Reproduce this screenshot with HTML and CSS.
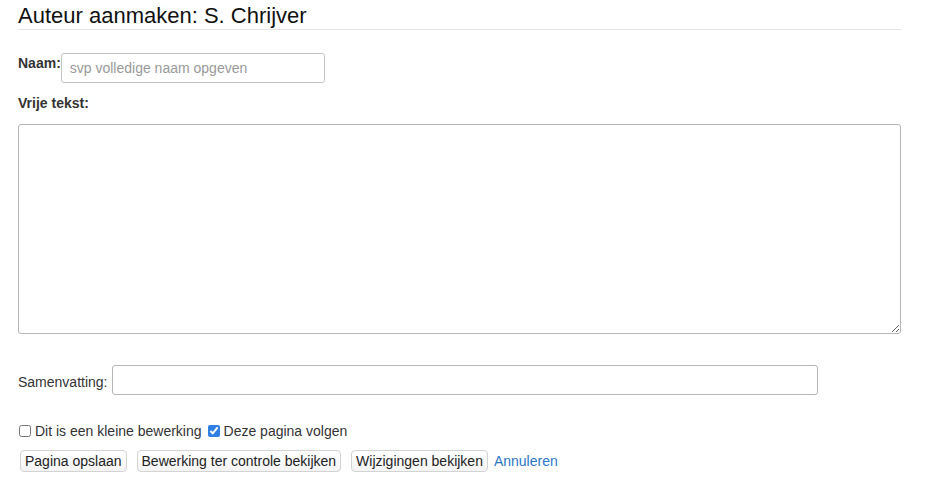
FILE: index.html
```html
<!DOCTYPE html>
<html lang="nl">
<head>
<meta charset="utf-8">
<title>Auteur aanmaken: S. Chrijver</title>
<link rel="stylesheet" href="styles.css">
</head>
<body>
<div class="page">
  <h1 class="title">Auteur aanmaken: S. Chrijver</h1>
  <form class="form">
    <div class="name-row">
      <label class="label-bold" for="naam">Naam:</label>
      <input class="name-input" id="naam" type="text" placeholder="svp volledige naam opgeven">
    </div>
    <div class="label-bold text-label">Vrije tekst:</div>
    <textarea class="text-area"></textarea>
    <div class="summary-row">
      <label class="summary-label" for="sam">Samenvatting:</label>
      <input class="summary-input" id="sam" type="text">
    </div>
    <div class="check-row">
      <label class="check"><input type="checkbox" class="box"> Dit is een kleine bewerking</label>
      <label class="check"><input type="checkbox" class="box" checked> Deze pagina volgen</label>
    </div>
    <div class="button-row">
      <button type="button" class="btn">Pagina opslaan</button>
      <button type="button" class="btn">Bewerking ter controle bekijken</button>
      <button type="button" class="btn">Wijzigingen bekijken</button>
      <a class="cancel" href="#">Annuleren</a>
    </div>
  </form>
</div>
</body>
</html>
```
FILE: styles.css
```css
* { box-sizing: border-box; }
body {
  margin: 0;
  background: #fff;
  font-family: "Liberation Sans", Arial, sans-serif;
  font-size: 14px;
  line-height: 20px;
  color: #333;
}
.page {
  width: 883px;
  margin-left: 18px;
}
.title {
  margin: 0;
  padding-top: 4px;
  font-size: 22px;
  font-weight: normal;
  line-height: 24px;
  color: #111;
  border-bottom: 1px solid #e6e6e6;
  padding-bottom: 1px;
}
.form {
  display: flex;
  flex-direction: column;
  padding-top: 23px;
}
.name-row {
  display: flex;
  align-items: flex-start;
}
.label-bold {
  font-weight: bold;
  color: #333;
}
.name-input {
  width: 264px;
  height: 30px;
  border: 1px solid #c4c4c4;
  border-radius: 3px;
  padding: 0 8px;
  font: inherit;
  color: #333;
}
.name-input::placeholder { color: #999; }
.text-label {
  margin-top: 10px;
}
.text-area {
  margin-top: 11px;
  width: 883px;
  height: 210px;
  border: 1px solid #b5b5b5;
  border-radius: 3px;
  resize: both;
  font: inherit;
}
.summary-row {
  display: flex;
  align-items: center;
  margin-top: 31px;
}
.summary-label {
  padding-top: 3px;
  margin-right: 4px;
}
.summary-input {
  width: 706px;
  height: 30px;
  border: 1px solid #b5b5b5;
  border-radius: 3px;
  font: inherit;
}
.check-row {
  display: flex;
  gap: 5px;
  margin-top: 26px;
}
.check {
  display: flex;
  align-items: center;
}
.box {
  width: 12px;
  height: 12px;
  margin: 0 4px 0 1px;
  accent-color: #2f7ee2;
}
.button-row {
  display: flex;
  align-items: center;
  gap: 9px;
  margin-top: 9px;
  padding-left: 2px;
}
.btn {
  height: 22px;
  padding: 0 4px;
  font: inherit;
  color: #222;
  background: linear-gradient(#fff, #f3f3f3);
  border: 1px solid #d3d3d3;
  border-radius: 4px;
  line-height: 20px;
}
.btn + .btn { margin-left: 1px; }
.cancel {
  margin-left: -3px;
  color: #2a78c5;
  text-decoration: none;
}
```
